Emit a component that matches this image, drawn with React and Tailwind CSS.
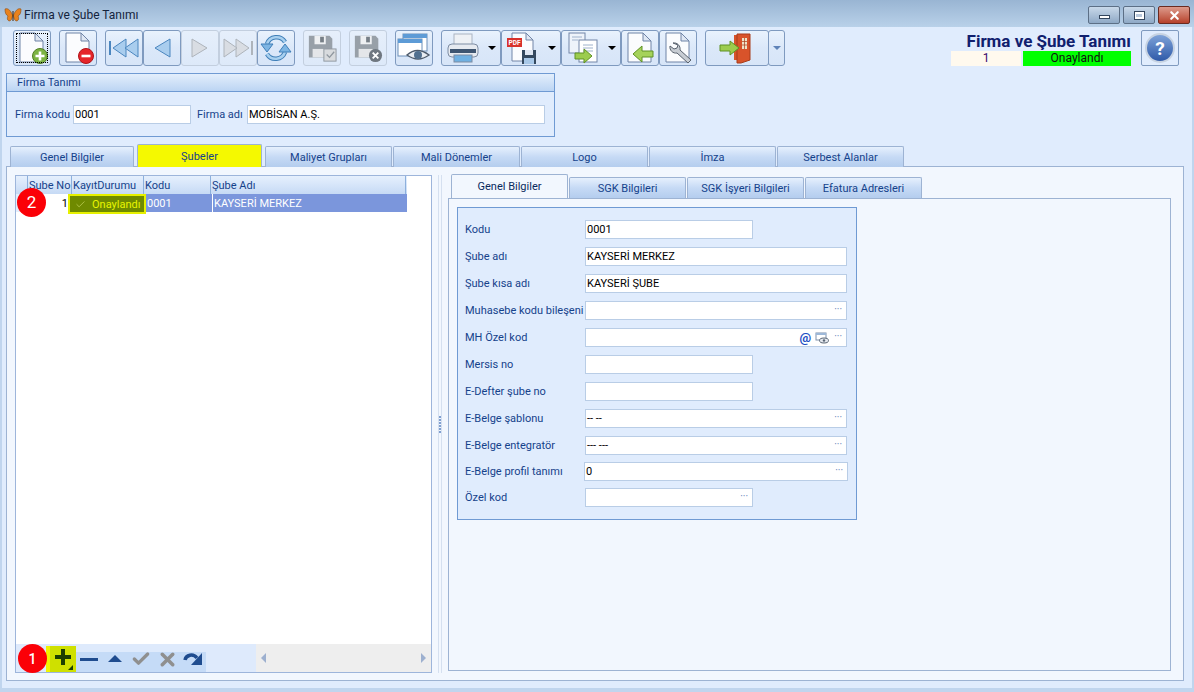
import { Check, X } from 'lucide-react';

const LABEL = 'text-[#15428b] whitespace-nowrap';

const OUTER_TABS = [
  { label: 'Genel Bilgiler', w: 'w-[124px]', gap: 'mr-[3px]' },
  { label: 'Şubeler', w: 'w-[125px]', gap: 'mr-[3px]', active: true },
  { label: 'Maliyet Grupları', w: 'w-[127px]', gap: 'mr-[1px]' },
  { label: 'Mali Dönemler', w: 'w-[127px]', gap: 'mr-[1px]' },
  { label: 'Logo', w: 'w-[127px]', gap: 'mr-[1px]' },
  { label: 'İmza', w: 'w-[127px]', gap: 'mr-[1px]' },
  { label: 'Serbest Alanlar', w: 'w-[127px]', gap: '' },
];

const INNER_TABS = ['SGK Bilgileri', 'SGK İşyeri Bilgileri', 'Efatura Adresleri'];

const FORM_ROWS = [
  { label: 'Kodu', value: '0001', short: true },
  { label: 'Şube adı', value: 'KAYSERİ MERKEZ' },
  { label: 'Şube kısa adı', value: 'KAYSERİ ŞUBE' },
  { label: 'Muhasebe kodu bileşeni', dots: true },
  { label: 'MH Özel kod', dots: true, extra: true },
  { label: 'Mersis no', short: true },
  { label: 'E-Defter şube no', short: true },
  { label: 'E-Belge şablonu', value: '-- --', dots: true },
  { label: 'E-Belge entegratör', value: '--- ---', dots: true },
  { label: 'E-Belge profil tanımı', value: '0', dots: true, wide: true },
  { label: 'Özel kod', short: true, dots: true },
];

function Page({ children }) {
  return (
    <svg viewBox="0 0 32 32" className="h-[32px] w-[32px]">
      <path d="M4 1h15l8 8v21H4z" fill="#fbfcfe" stroke="#6f83a6" strokeWidth="1" />
      <path d="M19 1v8h8z" fill="#dfe7f3" stroke="#6f83a6" strokeWidth="1" />
      {children}
    </svg>
  );
}

function Tri({ dir = 'left', on = true, bar }) {
  const fill = on ? '#a9cdee' : '#d9dde3';
  const stroke = on ? '#4b86bf' : '#aeb4bb';
  return (
    <svg viewBox="0 0 32 24" className="h-[24px] w-[32px]">
      <g transform={dir === 'right' ? 'matrix(-1 0 0 1 32 0)' : undefined}>
        {bar ? (
          <>
            <rect x="1" y="5" width="2" height="14" fill={stroke} />
            <path d="M18 3v18L5 12z" fill={fill} stroke={stroke} />
            <path d="M30 3v18L17 12z" fill={fill} stroke={stroke} />
          </>
        ) : (
          <path d="M24 3v18L9 12z" fill={fill} stroke={stroke} />
        )}
      </g>
    </svg>
  );
}

function Disk({ children }) {
  return (
    <svg viewBox="0 0 32 32" className="h-[30px] w-[30px]">
      <path d="M2 3h22l3 3v20H2z" fill="#98a0a8" />
      <rect x="8" y="3" width="12" height="9" fill="#eef0f2" />
      <rect x="14" y="4" width="4" height="6" fill="#777f87" />
      <rect x="6" y="17" width="15" height="9" fill="#e4e6e9" />
      {children}
    </svg>
  );
}

function ToolButton({ w = 'w-[38px]', gap = '', disabled, focus, children }) {
  return (
    <div
      className={`relative flex h-[36px] shrink-0 items-center justify-center rounded-[3px] border ${w} ${gap} ${
        disabled
          ? 'border-[#c3cfdf] bg-gradient-to-b from-[#e6effb] to-[#dde9f9]'
          : 'border-[#7f9abf] bg-gradient-to-b from-[#e9f2fd] via-[#dbe8f9] to-[#d7e5f8]'
      }`}
    >
      {focus && <div className="absolute inset-[2px] border border-dotted border-black" />}
      {children}
    </div>
  );
}

function Caret({ blue }) {
  return (
    <div
      className={`h-0 w-0 border-x-[4px] border-t-[4px] border-x-transparent ${
        blue ? 'border-t-[#5f83b8]' : 'border-t-black'
      }`}
    />
  );
}

function SplitButton({ children }) {
  return (
    <ToolButton w="w-[60px]">
      <div className="flex w-[42px] justify-center">{children}</div>
      <div className="flex w-[16px] justify-center">
        <Caret />
      </div>
    </ToolButton>
  );
}

function Toolbar() {
  return (
    <div className="flex h-[36px] items-start pl-[11px]">
      <ToolButton gap="mr-[8px]" focus>
        <Page>
          <circle cx="24" cy="24" r="7.500" fill="#7cb342" stroke="#4f7d22" />
          <path d="M24 19.500v9M19.500 24h9" stroke="#fff" strokeWidth="2.600" />
        </Page>
      </ToolButton>
      <ToolButton gap="mr-[8px]">
        <Page>
          <circle cx="24" cy="24" r="7.500" fill="#e5252a" stroke="#b01218" />
          <path d="M19.500 24h9" stroke="#fff" strokeWidth="2.600" />
        </Page>
      </ToolButton>
      <ToolButton>
        <Tri bar />
      </ToolButton>
      <ToolButton>
        <Tri />
      </ToolButton>
      <ToolButton disabled>
        <Tri dir="right" on={false} />
      </ToolButton>
      <ToolButton disabled>
        <Tri dir="right" on={false} bar />
      </ToolButton>
      <ToolButton gap="mr-[8px]">
        <svg viewBox="0 0 32 32" className="h-[32px] w-[32px]">
          <path d="M7 12a10 10 0 0 1 18-2" fill="none" stroke="#3f7fb8" strokeWidth="4.500" />
          <path d="M25 20a10 10 0 0 1-18 2" fill="none" stroke="#3f7fb8" strokeWidth="4.500" />
          <path d="M7 12a10 10 0 0 1 18-2" fill="none" stroke="#a8d0ef" strokeWidth="2.500" />
          <path d="M25 20a10 10 0 0 1-18 2" fill="none" stroke="#a8d0ef" strokeWidth="2.500" />
          <path d="M1 12h12l-6 8zM19 20h12l-6-8z" fill="#7db5e3" stroke="#3f7fb8" />
        </svg>
      </ToolButton>
      <ToolButton gap="mr-[8px]" disabled>
        <Disk>
          <rect x="18" y="17" width="13" height="13" fill="#d8dbde" stroke="#8f979f" />
          <path d="M21 23l3 3 5-6" fill="none" stroke="#8f979f" strokeWidth="1.400" />
        </Disk>
      </ToolButton>
      <ToolButton gap="mr-[8px]" disabled>
        <Disk>
          <circle cx="24" cy="24" r="7" fill="#6f7780" />
          <path d="M21 21l6 6M27 21l-6 6" stroke="#fff" strokeWidth="2" />
        </Disk>
      </ToolButton>
      <ToolButton gap="mr-[8px]">
        <svg viewBox="0 0 34 30" className="h-[30px] w-[34px]">
          <rect x="6" y="1" width="24" height="17" fill="#fff" stroke="#6d8fb8" />
          <rect x="6" y="1" width="24" height="4" fill="#5d9bd6" />
          <rect x="1" y="6" width="24" height="17" fill="#fff" stroke="#6d8fb8" />
          <rect x="1" y="6" width="24" height="4" fill="#5d9bd6" />
          <path d="M10 22q10-9 22 0-11 8-22 0z" fill="#e9edf2" stroke="#4d5a6a" strokeWidth="1.400" />
          <circle cx="21" cy="22" r="4" fill="#51708f" />
        </svg>
      </ToolButton>
      <SplitButton>
        <svg viewBox="0 0 32 30" className="h-[30px] w-[32px]">
          <rect x="7" y="1" width="18" height="11" fill="#eef1f5" stroke="#aab4c2" />
          <rect x="1" y="11" width="30" height="13" rx="4" fill="#e6eaf0" stroke="#7d8ca3" />
          <rect x="3" y="16" width="26" height="4" fill="#3e5571" />
          <rect x="7" y="22" width="18" height="7" fill="#6fb0e2" stroke="#7d8ca3" />
        </svg>
      </SplitButton>
      <SplitButton>
        <svg viewBox="0 0 32 32" className="h-[32px] w-[32px]">
          <path d="M5 1h14l7 7v21H5z" fill="#fbfcfe" stroke="#7286a8" />
          <path d="M19 1v7h7z" fill="#dfe7f3" stroke="#7286a8" />
          <rect x="0" y="6" width="15" height="9" fill="#d8322b" />
          <text x="1.500" y="13" fontSize="6.500" fontWeight="700" fill="#fff">PDF</text>
          <rect x="15" y="18" width="14" height="14" fill="#34495f" />
          <rect x="18" y="18" width="8" height="5" fill="#dfe7f3" />
          <rect x="17" y="26" width="10" height="6" fill="#a8c8e8" />
        </svg>
      </SplitButton>
      <SplitButton>
        <svg viewBox="0 0 32 32" className="h-[32px] w-[32px]">
          <rect x="2" y="1" width="16" height="20" fill="#eef3fa" stroke="#7286a8" />
          <rect x="12" y="8" width="18" height="22" fill="#fff" stroke="#7286a8" />
          <path d="M16 13h10M16 16h10M16 19h10M5 5h10M5 8h6" stroke="#9fb2cc" />
          <path d="M8 21h9v-4l8 7-8 7v-4H8z" fill="#9ccc4e" stroke="#5f9224" />
        </svg>
      </SplitButton>
      <ToolButton>
        <Page>
          <path d="M29 19h-11v-5l-9 8 9 8v-5h11z" fill="#a5d25a" stroke="#5f9224" />
        </Page>
      </ToolButton>
      <ToolButton gap="mr-[8px]">
        <Page>
          <path d="M11 11a6 6 0 0 1 7 7l11 10-3 3-11-10a6 6 0 0 1-7-7l4 3 3-1 1-3z" fill="#c7ccd3" stroke="#59626e" />
        </Page>
      </ToolButton>
      <div className="flex">
        <ToolButton w="w-[64px]">
          <svg viewBox="0 0 36 32" className="h-[32px] w-[36px]">
            <path d="M15 3h3v25h-3z" fill="#d8532a" />
            <path d="M18 2h13v26l-9 3h-4z" fill="#d8532a" stroke="#a83c1a" />
            <rect x="23" y="6" width="5" height="11" fill="#efe3c8" />
            <path d="M23 9.500h5M23 13h5M25.500 6v11" stroke="#a83c1a" strokeWidth=".7" />
            <path d="M1 13h10V9l9 7-9 7v-4H1z" fill="#9ccc4e" stroke="#5f9224" />
          </svg>
        </ToolButton>
        <ToolButton w="w-[17px]" gap="-ml-px">
          <Caret blue />
        </ToolButton>
      </div>
    </div>
  );
}

function Field({ w, value, dots, extra }) {
  return (
    <div className={`flex h-[19px] shrink-0 items-center border border-[#b9cde6] bg-white pl-[1px] pr-[4px] text-black ${w}`}>
      <span className="flex-1 whitespace-nowrap">{value}</span>
      {extra && (
        <span className="mr-[5px] flex items-center gap-[4px]">
          <span className="text-[13px] font-bold leading-none text-[#1d4fc4]">@</span>
          <svg viewBox="0 0 14 12" className="h-[12px] w-[14px]">
            <rect x="1" y="1" width="10" height="7" fill="#fff" stroke="#7c90ab" />
            <rect x="1" y="1" width="10" height="2" fill="#9db8d8" />
            <ellipse cx="9" cy="8.500" rx="4.500" ry="2.500" fill="#e4e8ee" stroke="#5a6675" />
            <circle cx="9" cy="8.500" r="1.200" fill="#5a6675" />
          </svg>
        </span>
      )}
      {dots && <span className="relative -top-[1px] text-[10px] leading-none text-[#5f83b8]">···</span>}
    </div>
  );
}

function FirmaPanel() {
  return (
    <div className="ml-[4px] mt-[7px] h-[64px] w-[549px] border border-[#6f9ad3]">
      <div className="flex h-[18px] items-center border-b border-[#6f9ad3] bg-gradient-to-b from-[#e3eefc] to-[#bcd5f3] pl-[10px] text-[#15428b]">
        Firma Tanımı
      </div>
      <div className="flex items-center pl-[8px] pt-[13px]">
        <span className={`w-[58px] ${LABEL}`}>Firma kodu</span>
        <Field w="w-[118px]" value="0001" />
        <span className={`ml-[6px] w-[50px] ${LABEL}`}>Firma adı</span>
        <Field w="w-[298px]" value="MOBİSAN A.Ş." />
      </div>
    </div>
  );
}

function OuterTabs() {
  return (
    <div className="ml-[8px] mt-[8px] flex h-[22px] items-end">
      {OUTER_TABS.map((tab) =>
        tab.active ? (
          <div
            key={tab.label}
            className={`relative z-10 flex h-[23px] items-center justify-center rounded-t-[2px] border border-b-0 border-[#9db3d3] bg-[#f5f900] text-[#15428b] ${tab.w} ${tab.gap}`}
          >
            Şubeler
          </div>
        ) : (
          <div
            key={tab.label}
            className={`flex h-[21px] items-center justify-center rounded-t-[2px] border border-b-0 border-[#9db3d3] bg-gradient-to-b from-[#e6f0fd] via-[#c6daf5] to-[#b4cdee] text-[#15428b] ${tab.w} ${tab.gap}`}
          >
            {tab.label}
          </div>
        ),
      )}
    </div>
  );
}

function HeaderCell({ w, children }) {
  return (
    <div className={`flex h-full shrink-0 items-center whitespace-nowrap border-r border-[#8db0dc] pl-[1px] text-[#15428b] ${w}`}>
      {children}
    </div>
  );
}

function NavIcon({ children }) {
  return <div className="flex h-[20px] w-[26px] items-center justify-center">{children}</div>;
}

function GridNavigator() {
  return (
    <div className="flex h-[28px] items-end">
      <div className="flex h-[28px] w-[190px] shrink-0 items-end bg-[#deeafc] pl-[30px]">
        <div className="h-[26px] w-[4px] bg-[#f0f500]" />
        <div className="relative flex h-[26px] w-[27px] items-start justify-center bg-[#cfe000] pt-[2px]">
          <svg viewBox="0 0 18 18" className="h-[18px] w-[18px]">
            <path d="M7 1h4v6h6v4h-6v6H7v-6H1V7h6z" fill="#1c3f00" />
          </svg>
          <div className="absolute bottom-[2px] right-[3px] h-0 w-0 border-b-[5px] border-l-[5px] border-b-[#1c3f00] border-l-transparent" />
        </div>
        <div className="flex h-[20px] flex-1 items-center bg-[#c5dbf7]">
          <NavIcon>
            <div className="mb-[6px] h-[3px] w-[18px] bg-[#1f4c8f]" />
          </NavIcon>
          <NavIcon>
            <div className="mb-[7px] h-0 w-0 border-x-[7px] border-b-[7px] border-x-transparent border-b-[#1f4c8f]" />
          </NavIcon>
          <NavIcon>
            <Check size={20} strokeWidth={4} className="mb-[6px] text-[#8f8f8f]" />
          </NavIcon>
          <NavIcon>
            <X size={21} strokeWidth={4} className="mb-[6px] text-[#8f8f8f]" />
          </NavIcon>
          <NavIcon>
            <svg viewBox="0 0 20 16" className="mb-[6px] h-[16px] w-[20px]">
              <path d="M2 9C3 4 10 2 14 7" fill="none" stroke="#1f4c8f" strokeWidth="3.500" />
              <path d="M19 2v12H8z" fill="#1f4c8f" />
            </svg>
          </NavIcon>
        </div>
      </div>
      <div className="h-[28px] w-[50px] shrink-0 bg-[#deeafc]" />
      <div className="flex h-[28px] flex-1 items-center justify-between bg-[#eeeeee] px-[5px]">
        <div className="h-0 w-0 border-y-[5px] border-r-[5px] border-y-transparent border-r-[#9db0cf]" />
        <div className="h-0 w-0 border-y-[5px] border-l-[5px] border-y-transparent border-l-[#9db0cf]" />
      </div>
    </div>
  );
}

function Grid() {
  return (
    <div className="relative flex h-[498px] w-[417px] shrink-0 flex-col border border-[#9db5db] bg-white">
      <div className="flex h-[18px] w-[391px] bg-gradient-to-b from-[#e6f0fd] to-[#c6daf5]">
        <HeaderCell w="w-[12px]" />
        <HeaderCell w="w-[44px]">Şube No</HeaderCell>
        <HeaderCell w="w-[72px]">KayıtDurumu</HeaderCell>
        <HeaderCell w="w-[67px]">Kodu</HeaderCell>
        <HeaderCell w="w-[195px]">Şube Adı</HeaderCell>
      </div>
      <div className="flex h-[18px] w-[391px] text-white">
        <div className="w-[12px] shrink-0 bg-[#e3eefc]" />
        <div className="flex w-[40px] shrink-0 items-center justify-end bg-white text-black">1</div>
        <div className="relative z-10 flex h-[20px] w-[78px] shrink-0 items-center whitespace-nowrap border-[2px] border-[#e6f000] bg-[#6f8a00] pl-[5px] text-[#e8f500]">
          <Check size={11} strokeWidth={1.500} className="mr-[6px] text-[#c8d860]" />
          Onaylandı
        </div>
        <div className="flex w-[67px] shrink-0 items-center border-r border-white bg-[#7b96dc] pl-[1px]">0001</div>
        <div className="flex w-[194px] shrink-0 items-center whitespace-nowrap bg-[#7b96dc] pl-[1px]">KAYSERİ MERKEZ</div>
      </div>
      <div className="flex-1" />
      <GridNavigator />

      <div className="absolute left-[1px] top-[12px] z-20 flex h-[29px] w-[29px] items-center justify-center rounded-full bg-[#fb0007] text-[17px] text-white">
        2
      </div>
      <div className="absolute bottom-[-1px] left-[2px] z-20 flex h-[29px] w-[29px] items-center justify-center rounded-full bg-[#fb0007] text-[14px] font-medium text-white">
        1
      </div>
    </div>
  );
}

function Splitter() {
  return (
    <div className="relative flex w-[16px] shrink-0 justify-center">
      <div className="h-[498px] w-[4px] border-x border-[#d5e0f0]" />
      <div className="absolute left-[7px] top-[241px] flex flex-col gap-[1px]">
        {[0, 1, 2, 3, 4, 5].map((i) => (
          <div key={i} className="h-[2px] w-[2px] bg-[#7f9fd0]" />
        ))}
      </div>
    </div>
  );
}

function DetailForm() {
  return (
    <div className="ml-[8px] mt-[8px] h-[313px] w-[400px] border border-[#6f9ad3] bg-[#e0ecfd] pl-[7px] pt-[12px]">
      {FORM_ROWS.map((row, i) => (
        <div
          key={row.label}
          className={`flex h-[19px] items-center ${i === 8 || i === 9 ? 'mb-[7px]' : 'mb-[8px]'}`}
        >
          <span className={`shrink-0 ${LABEL} ${row.wide ? 'w-[119px]' : 'w-[120px]'}`}>{row.label}</span>
          <Field
            w={row.short ? 'w-[168px]' : row.wide ? 'w-[264px]' : 'w-[262px]'}
            value={row.value}
            dots={row.dots}
            extra={row.extra}
          />
        </div>
      ))}
    </div>
  );
}

function DetailPane() {
  return (
    <div className="flex flex-col">
      <div className="flex h-[23px] items-end pl-[3px]">
        <div className="relative z-10 mr-[1px] flex h-[24px] w-[117px] items-center justify-center rounded-t-[2px] border border-b-0 border-[#9db3d3] bg-[#f2f7fe] text-[#0a2a5e]">
          Genel Bilgiler
        </div>
        {INNER_TABS.map((label) => (
          <div
            key={label}
            className="mr-[1px] flex h-[21px] w-[117px] items-center justify-center rounded-t-[2px] border border-b-0 border-[#9db3d3] bg-gradient-to-b from-[#e6f0fd] via-[#c6daf5] to-[#b4cdee] text-[#15428b]"
          >
            {label}
          </div>
        ))}
      </div>
      <div className="h-[473px] w-[723px] border border-[#9db3d3] bg-[#f2f7fe]">
        <DetailForm />
      </div>
    </div>
  );
}

export default function App() {
  return (
    <div className="h-[692px] w-[1194px] overflow-hidden bg-[#c0d5ee] font-['Roboto',sans-serif] text-[11px] leading-none">
      <div className="flex h-[27px] items-start bg-gradient-to-b from-[#99b5d3] to-[#b9d1e9] pl-[4px] pt-[7px]">
        <svg viewBox="0 0 18 16" className="h-[16px] w-[18px]">
          <path d="M8.500 8C6 2 3 1 1 2c0 4 1 6 3 7-1 2-1 4 1 5 2 0 3-2 3.500-5z" fill="#e8821e" stroke="#8a4a10" strokeWidth=".6" />
          <path d="M9.500 8C12 2 15 1 17 2c0 4-1 6-3 7 1 2 1 4-1 5-2 0-3-2-3.500-5z" fill="#e8821e" stroke="#8a4a10" strokeWidth=".6" />
          <rect x="8.500" y="4" width="1" height="10" fill="#3a2410" />
        </svg>
        <span className="ml-[2px] mt-[2px] text-[12px] text-[#14233c]">Firma ve Şube Tanımı</span>
        <div className="ml-auto mr-[4px] mt-[-1px] flex gap-[3px]">
          <div className="flex h-[18px] w-[32px] items-center justify-center rounded-[2px] border border-[#5c6f86] bg-gradient-to-b from-[#c9d9ea] to-[#8fa9c6]">
            <div className="mt-[4px] h-[4px] w-[11px] border border-[#33465e] bg-white" />
          </div>
          <div className="flex h-[18px] w-[32px] items-center justify-center rounded-[2px] border border-[#5c6f86] bg-gradient-to-b from-[#c9d9ea] to-[#8fa9c6]">
            <div className="flex h-[9px] w-[11px] items-center justify-center border border-[#33465e] bg-white">
              <div className="h-[3px] w-[6px] bg-[#b9c9dc]" />
            </div>
          </div>
          <div className="flex h-[18px] w-[32px] items-center justify-center rounded-[2px] border border-[#6a2a20] bg-gradient-to-b from-[#dc9a8c] to-[#b6402a]">
            <X size={13} strokeWidth={4} className="text-white" />
          </div>
        </div>
      </div>

      <div className="mx-[2px] h-[661px] bg-[#e0ecfd] pt-[3px]">
        <div className="relative">
          <Toolbar />
          <div className="absolute right-[61px] top-[3px] flex flex-col items-end">
            <span className="text-[17px] font-bold leading-[16px] text-[#10206e]">Firma ve Şube Tanımı</span>
            <div className="mt-[2px] flex gap-[2px] text-[12px] leading-[15px]">
              <div className="h-[15px] w-[70px] bg-[#fff9ee] text-center text-[#3a0a6a]">1</div>
              <div className="h-[15px] w-[108px] bg-[#00ff00] text-center text-[#101010]">Onaylandı</div>
            </div>
          </div>
          <div className="absolute right-[13px] top-0 flex h-[36px] w-[38px] items-center justify-center rounded-[2px] border border-[#7f9abf]">
            <div className="flex h-[30px] w-[30px] items-center justify-center rounded-full border-[2px] border-[#c7d3e2] bg-gradient-to-b from-[#7ea2d8] to-[#2f5aa8] text-[19px] font-bold text-white">
              ?
            </div>
          </div>
        </div>

        <FirmaPanel />
        <OuterTabs />

        <div className="-mt-px ml-[4px] flex h-[515px] w-[1178px] items-start border border-[#9db3d3] bg-[#f2f7fe] pl-[8px] pt-[8px]">
          <Grid />
          <Splitter />
          <DetailPane />
        </div>
      </div>
    </div>
  );
}
